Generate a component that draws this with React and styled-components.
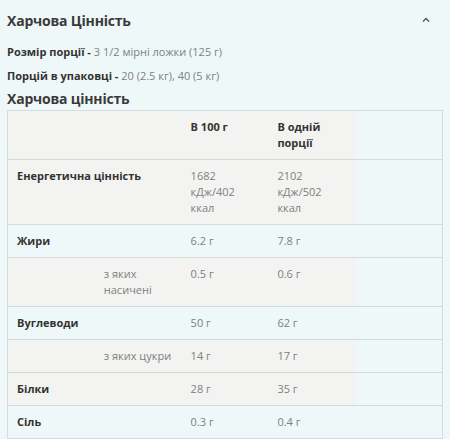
import styled, { createGlobalStyle } from "styled-components";

const GlobalStyle = createGlobalStyle`
  html, body {
    margin: 0;
    padding: 0;
    background: #eff8f8;
  }
  body {
    font-family: "Open Sans", "Noto Sans", sans-serif;
    color: #333;
  }
`;

const Panel = styled.section`
  padding: 9px 9px 0 7px;
  background: #eff8f8;
`;

const Header = styled.div`
  display: flex;
  align-items: center;
  justify-content: space-between;
  height: 22px;
`;

const Title = styled.h2`
  margin: 0;
  font-size: 14px;
  font-weight: 700;
  color: #3a3a3a;
  letter-spacing: -0.2px;
`;

const Chevron = styled.svg`
  width: 8px;
  height: 8px;
  margin-right: 11px;
  color: #555;
`;

const Facts = styled.div`
  display: flex;
  flex-direction: column;
  gap: 8px;
  margin-top: 13px;
`;

const Fact = styled.p`
  margin: 0;
  font-size: 11px;
  line-height: 16px;
  color: #808080;
  b {
    font-weight: 700;
    color: #333;
  }
`;

const SubTitle = styled.h3`
  margin: 6px 0 2px;
  font-size: 14px;
  font-weight: 700;
  color: #3a3a3a;
  line-height: 18px;
  letter-spacing: -0.2px;
`;

const Table = styled.div`
  border: 1px solid #d6dcdc;
  border-bottom: none;
  width: 434px;
`;

const Row = styled.div`
  display: grid;
  grid-template-columns: repeat(5, 1fr);
  border-bottom: 1px solid #d4dada;
`;

const Cell = styled.div`
  padding: 8px 8px 8px 9px;
  font-size: 11px;
  line-height: 16px;
  color: ${(p) => (p.$bold ? "#333" : "#808080")};
  font-weight: ${(p) => (p.$bold ? 700 : 400)};
  background: ${(p) => (p.$grey ? "#f3f3f2" : "transparent")};
  grid-column: ${(p) => (p.$span ? `span ${p.$span}` : "auto")};
`;

const rows = [
  { label: "Енергетична цінність", a: "1682 кДж/402 ккал", b: "2102 кДж/502 ккал", grey: true },
  { label: "Жири", a: "6.2 г", b: "7.8 г" },
  { sub: "з яких насичені", a: "0.5 г", b: "0.6 г", grey: true },
  { label: "Вуглеводи", a: "50 г", b: "62 г" },
  { sub: "з яких цукри", a: "14 г", b: "17 г", grey: true },
  { label: "Білки", a: "28 г", b: "35 г", grey: true },
  { label: "Сіль", a: "0.3 г", b: "0.4 г" },
];

function NutritionRow({ row }) {
  const { label, sub, a, b, grey } = row;
  return (
    <Row>
      {label ? (
        <Cell $span={2} $bold $grey={grey}>
          {label}
        </Cell>
      ) : (
        <>
          <Cell $grey={grey} />
          <Cell $grey={grey}>{sub}</Cell>
        </>
      )}
      <Cell $grey={grey}>{a}</Cell>
      <Cell $grey={grey}>{b}</Cell>
      <Cell />
    </Row>
  );
}

export default function App() {
  return (
    <>
      <GlobalStyle />
      <Panel>
        <Header>
          <Title>Харчова Цінність</Title>
          <Chevron viewBox="0 0 8 8" fill="none">
            <path d="M1 5.5 L4 2.5 L7 5.5" stroke="currentColor" strokeWidth="1.4" />
          </Chevron>
        </Header>
        <Facts>
          <Fact>
            <b>Розмір порції - </b>3 1/2 мірні ложки (125 г)
          </Fact>
          <Fact>
            <b>Порцій в упаковці - </b>20 (2.5 кг), 40 (5 кг)
          </Fact>
        </Facts>
        <SubTitle>Харчова цінність</SubTitle>
        <Table>
          <Row>
            <Cell $span={2} $grey />
            <Cell $bold $grey>
              В 100 г
            </Cell>
            <Cell $bold $grey>
              В одній порції
            </Cell>
            <Cell />
          </Row>
          {rows.map((row, i) => (
            <NutritionRow key={i} row={row} />
          ))}
        </Table>
      </Panel>
    </>
  );
}
